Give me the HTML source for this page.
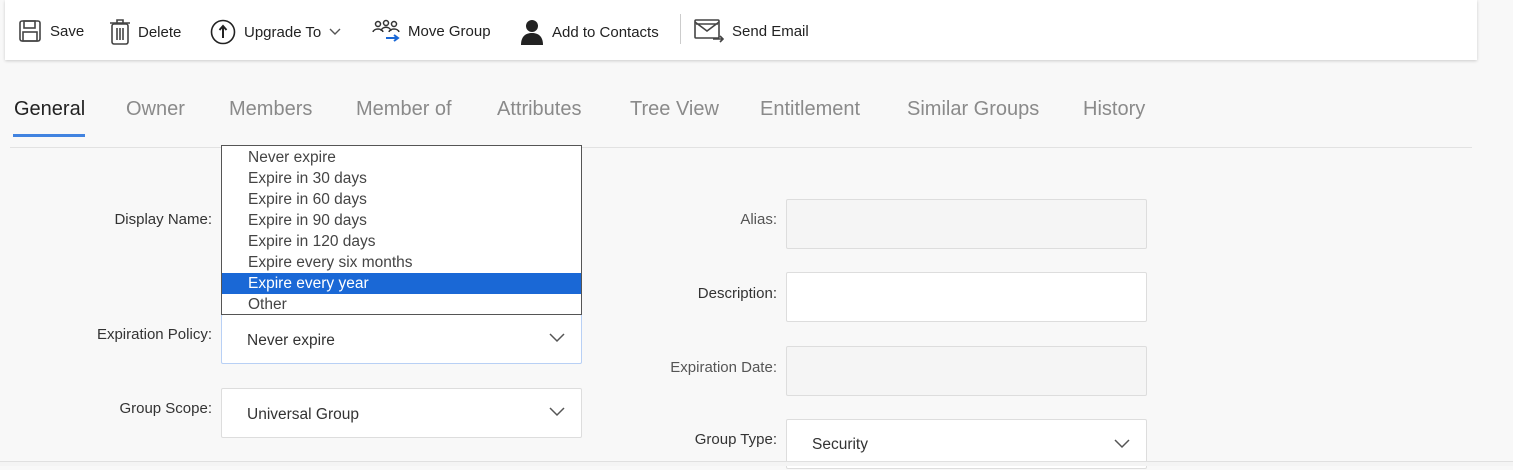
<!DOCTYPE html>
<html><head><style>
*{margin:0;padding:0;box-sizing:border-box}
body{width:1513px;height:466px;background:#f8f8f8;font-family:"Liberation Sans",sans-serif;position:relative;overflow:hidden;color:#333}
.tb{position:absolute;left:5px;top:0;width:1472px;height:60px;background:#fff;box-shadow:0 1px 3px rgba(0,0,0,.18)}
.ti{position:absolute;top:19px;font-size:15px;color:#222;display:flex;align-items:center;gap:8px}
.ti svg{display:block}
.tab{position:absolute;top:98px;font-size:20px;color:#8a8a8a}
.lbl{position:absolute;font-size:15px;color:#333;text-align:right;width:200px}
.box{position:absolute;width:361px;height:50px;border:1px solid #ddd;border-radius:2px;background:#fff}
.gray{background:#f5f5f5}
.sel{font-size:15.5px;color:#333;padding-left:25px;line-height:52px}
.chev{position:absolute;right:16px;top:18px}
.dd{position:absolute;left:221px;top:145px;width:361px;height:170px;border:1px solid #555;background:#fff;padding-top:1px}
.dd div{height:21px;line-height:21px;font-size:15.5px;color:#444;padding-left:26px}
.dd .hl{background:#1a68d6;color:#fff}
</style></head><body>
<div class="tb"></div>
<div class="ti" style="left:18px"><svg width="24" height="24" viewBox="0 0 24 24" fill="none" stroke="#444" stroke-width="1.6"><rect x="2" y="2" width="20" height="20" rx="2"/><rect x="6" y="2" width="11" height="7"/><rect x="5" y="13" width="14" height="9"/></svg>Save</div>
<div class="ti" style="left:110px"><svg width="20" height="26" viewBox="0 0 20 26" fill="none" stroke="#444" stroke-width="1.6"><rect x="2" y="5" width="16" height="20" rx="2"/><path d="M0 4h20M7 4V1h6v3M7 9v12M10 9v12M13 9v12"/></svg>Delete</div>
<div class="ti" style="left:210px"><svg width="26" height="26" viewBox="0 0 26 26" fill="none" stroke="#222" stroke-width="1.6"><circle cx="13" cy="13" r="11.5"/><path d="M13 19V8M9.5 11L13 7l3.5 4" stroke-width="2"/></svg>Upgrade To <svg width="12" height="8" viewBox="0 0 12 8" fill="none" stroke="#555" stroke-width="1.4"><path d="M1 1l5 5 5-5"/></svg></div>
<div class="ti" style="left:372px"><svg width="28" height="24" viewBox="0 0 28 24" fill="none" stroke="#333" stroke-width="1.5"><circle cx="6" cy="5" r="2.5"/><circle cx="14" cy="4" r="2.5"/><circle cx="22" cy="5" r="2.5"/><path d="M1 13c1-4 9-4 10 0M9 12c1-5 9-5 10 0M17 13c1-4 9-4 10 0"/><path d="M14 19h12M22 16l4 3-4 3" stroke="#1a68d6" stroke-width="2"/></svg>Move Group</div>
<div class="ti" style="left:520px"><svg width="24" height="26" viewBox="0 0 24 26"><circle cx="12" cy="7" r="6" fill="#222"/><path d="M1 26c0-9 5-12 11-12s11 3 11 12z" fill="#222"/></svg>Add to Contacts</div>
<div style="position:absolute;left:680px;top:14px;width:1px;height:30px;background:#ccc"></div>
<div class="ti" style="left:694px"><svg width="30" height="24" viewBox="0 0 30 24" fill="none" stroke="#444" stroke-width="1.6"><rect x="1" y="1" width="24" height="18" rx="1"/><path d="M1 3l12 9 12-9M2 5h22" /><path d="M19 20h10M26 17l3 3-3 3" stroke-width="1.6"/></svg>Send Email</div>

<div class="tab" style="left:14px;color:#222">General</div>
<div style="position:absolute;left:13px;top:134px;width:72px;height:3px;background:#4183e0"></div>
<div class="tab" style="left:126px">Owner</div>
<div class="tab" style="left:229px">Members</div>
<div class="tab" style="left:356px">Member of</div>
<div class="tab" style="left:497px">Attributes</div>
<div class="tab" style="left:630px">Tree View</div>
<div class="tab" style="left:760px">Entitlement</div>
<div class="tab" style="left:907px">Similar Groups</div>
<div class="tab" style="left:1083px">History</div>
<div style="position:absolute;left:10px;top:147px;width:1462px;height:1px;background:#e2e2e2"></div>

<div class="lbl" style="left:12px;top:211px">Display Name:</div>
<div class="lbl" style="left:12px;top:326px">Expiration Policy:</div>
<div class="lbl" style="left:12px;top:400px">Group Scope:</div>
<div class="box sel" style="left:221px;top:314px;border-color:#b8d0f5;height:50px">Never expire<svg class="chev" width="16" height="10" viewBox="0 0 16 10" fill="none" stroke="#555" stroke-width="1.5"><path d="M1 1l7 7 7-7"/></svg></div>
<div class="box sel" style="left:221px;top:388px">Universal Group<svg class="chev" width="16" height="10" viewBox="0 0 16 10" fill="none" stroke="#555" stroke-width="1.5"><path d="M1 1l7 7 7-7"/></svg></div>

<div class="dd">
<div>Never expire</div><div>Expire in 30 days</div><div>Expire in 60 days</div><div>Expire in 90 days</div><div>Expire in 120 days</div><div>Expire every six months</div><div class="hl">Expire every year</div><div>Other</div>
</div>

<div class="lbl" style="left:577px;top:211px;color:#555">Alias:</div>
<div class="lbl" style="left:577px;top:285px">Description:</div>
<div class="lbl" style="left:577px;top:359px;color:#555">Expiration Date:</div>
<div class="lbl" style="left:577px;top:431px">Group Type:</div>
<div class="box gray" style="left:786px;top:199px"></div>
<div class="box" style="left:786px;top:272px"></div>
<div class="box gray" style="left:786px;top:346px"></div>
<div class="box sel" style="left:786px;top:419px;line-height:50px">Security<svg class="chev" style="top:19px" width="16" height="10" viewBox="0 0 16 10" fill="none" stroke="#555" stroke-width="1.5"><path d="M1 1l7 7 7-7"/></svg></div>
<div style="position:absolute;left:0;top:461px;width:1513px;height:5px;background:#f4f4f4;border-top:1px solid #e0e0e0"></div>
</body></html>
